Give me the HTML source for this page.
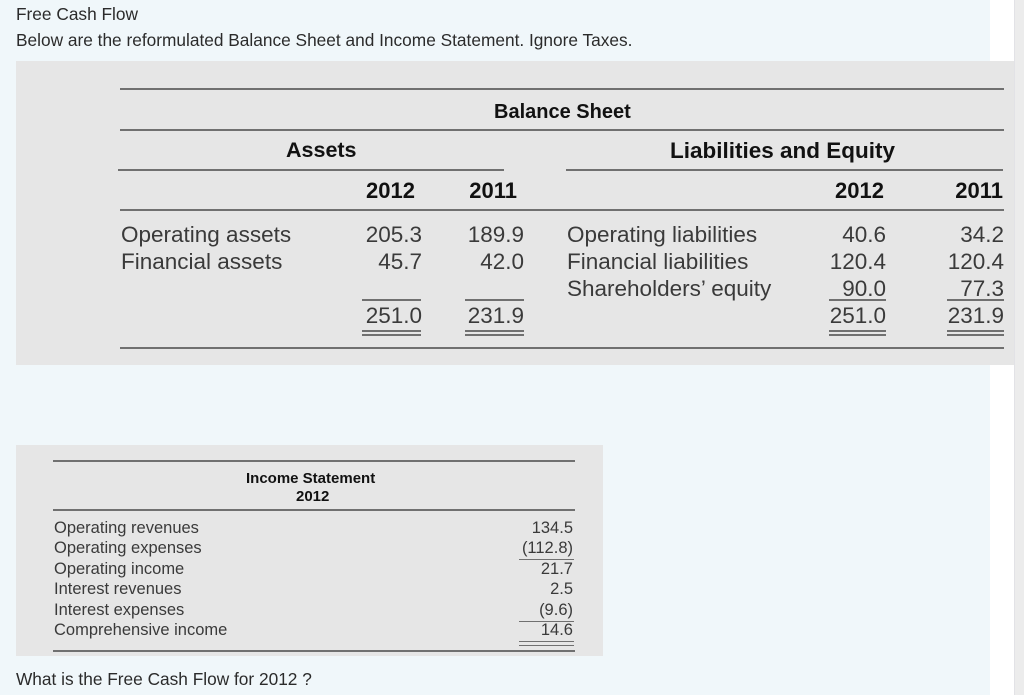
<!DOCTYPE html>
<html><head><meta charset="utf-8"><style>
*{margin:0;padding:0;box-sizing:border-box}
body{width:1024px;height:695px;position:relative;overflow:hidden;background:#fff;font-family:"Liberation Sans",sans-serif}
.bg{position:absolute;left:0;top:0;width:990px;height:695px;background:#f0f7fa}
.strip{position:absolute;left:1014px;top:0;width:10px;height:695px;background:#ececec;border-left:1px solid #e2e2e6}
.t{position:absolute;white-space:nowrap;color:#222}
.p{font-size:17.3px;color:#2b2b2b}
.img{position:absolute;background:#e6e6e6}
.l{position:absolute;height:2px;background:#707070}
.l1{position:absolute;height:1px;background:#707070}
.b{font-weight:bold;color:#111}
.n{color:#3a3a3a}
.r{text-align:right}
</style></head><body>
<div class="bg"></div>
<div class="strip"></div>
<div class="t p" style="left:16px;top:4px">Free Cash Flow</div>
<div class="t p" style="left:16px;top:30px">Below are the reformulated Balance Sheet and Income Statement. Ignore Taxes.</div>

<div class="img" style="left:16px;top:61px;width:998px;height:304px"></div>
<div class="l" style="left:120px;top:88px;width:884px"></div>
<div class="t b" style="left:494px;top:101px;font-size:20px">Balance Sheet</div>
<div class="l" style="left:120px;top:129px;width:884px"></div>
<div class="t b" style="left:286px;top:138px;font-size:21.5px">Assets</div>
<div class="t b" style="left:670px;top:138px;font-size:22.5px">Liabilities and Equity</div>
<div class="l" style="left:118px;top:169px;width:386px"></div>
<div class="l" style="left:566px;top:169px;width:437px"></div>
<div class="t b r" style="left:315px;top:178px;width:100px;font-size:22px">2012</div>
<div class="t b r" style="left:417px;top:178px;width:100px;font-size:22px">2011</div>
<div class="t b r" style="left:784px;top:178px;width:100px;font-size:22px">2012</div>
<div class="t b r" style="left:903px;top:178px;width:100px;font-size:22px">2011</div>
<div class="l" style="left:120px;top:209px;width:884px"></div>

<div class="t n" style="left:121px;top:221px;font-size:22.5px;line-height:27px">Operating assets<br>Financial assets</div>
<div class="t n r" style="left:300px;top:221px;width:122px;font-size:22.5px;line-height:27px">205.3<br>45.7</div>
<div class="t n r" style="left:400px;top:221px;width:124px;font-size:22.5px;line-height:27px">189.9<br>42.0</div>
<div class="t n" style="left:567px;top:221px;font-size:22.5px;line-height:27px">Operating liabilities<br>Financial liabilities<br>Shareholders’ equity</div>
<div class="t n r" style="left:770px;top:221px;width:116px;font-size:22.5px;line-height:27px">40.6<br>120.4<br>90.0</div>
<div class="t n r" style="left:880px;top:221px;width:124px;font-size:22.5px;line-height:27px">34.2<br>120.4<br>77.3</div>

<div class="l" style="left:362px;top:299px;width:59px"></div>
<div class="l" style="left:465px;top:299px;width:59px"></div>
<div class="l" style="left:829px;top:299px;width:57px"></div>
<div class="l" style="left:947px;top:299px;width:57px"></div>
<div class="t n r" style="left:300px;top:303px;width:122px;font-size:22.5px">251.0</div>
<div class="t n r" style="left:400px;top:303px;width:124px;font-size:22.5px">231.9</div>
<div class="t n r" style="left:770px;top:303px;width:116px;font-size:22.5px">251.0</div>
<div class="t n r" style="left:880px;top:303px;width:124px;font-size:22.5px">231.9</div>
<div class="l" style="left:362px;top:330px;width:59px"></div><div class="l" style="left:362px;top:334px;width:59px"></div>
<div class="l" style="left:465px;top:330px;width:59px"></div><div class="l" style="left:465px;top:334px;width:59px"></div>
<div class="l" style="left:829px;top:330px;width:57px"></div><div class="l" style="left:829px;top:334px;width:57px"></div>
<div class="l" style="left:947px;top:330px;width:57px"></div><div class="l" style="left:947px;top:334px;width:57px"></div>
<div class="l" style="left:120px;top:347px;width:884px"></div>

<div class="img" style="left:16px;top:445px;width:587px;height:211px"></div>
<div class="l" style="left:53px;top:460px;width:522px"></div>
<div class="t b" style="left:246px;top:470px;font-size:15px">Income Statement</div>
<div class="t b" style="left:296px;top:488px;font-size:15px">2012</div>
<div class="l" style="left:53px;top:509px;width:522px"></div>
<div class="t n" style="left:54px;top:518px;font-size:16.5px;line-height:20.4px">Operating revenues<br>Operating expenses<br>Operating income<br>Interest revenues<br>Interest expenses<br>Comprehensive income</div>
<div class="t n r" style="left:480px;top:518px;width:93px;font-size:16.5px;line-height:20.4px">134.5<br>(112.8)<br>21.7<br>2.5<br>(9.6)<br>14.6</div>
<div class="l1" style="left:519px;top:559px;width:55px"></div>
<div class="l1" style="left:519px;top:621px;width:55px"></div>
<div class="l1" style="left:519px;top:641px;width:55px"></div>
<div class="l1" style="left:519px;top:645px;width:55px"></div>
<div class="l" style="left:53px;top:650px;width:522px"></div>

<div class="t p" style="left:16px;top:669px">What is the Free Cash Flow for 2012 ?</div>
</body></html>
